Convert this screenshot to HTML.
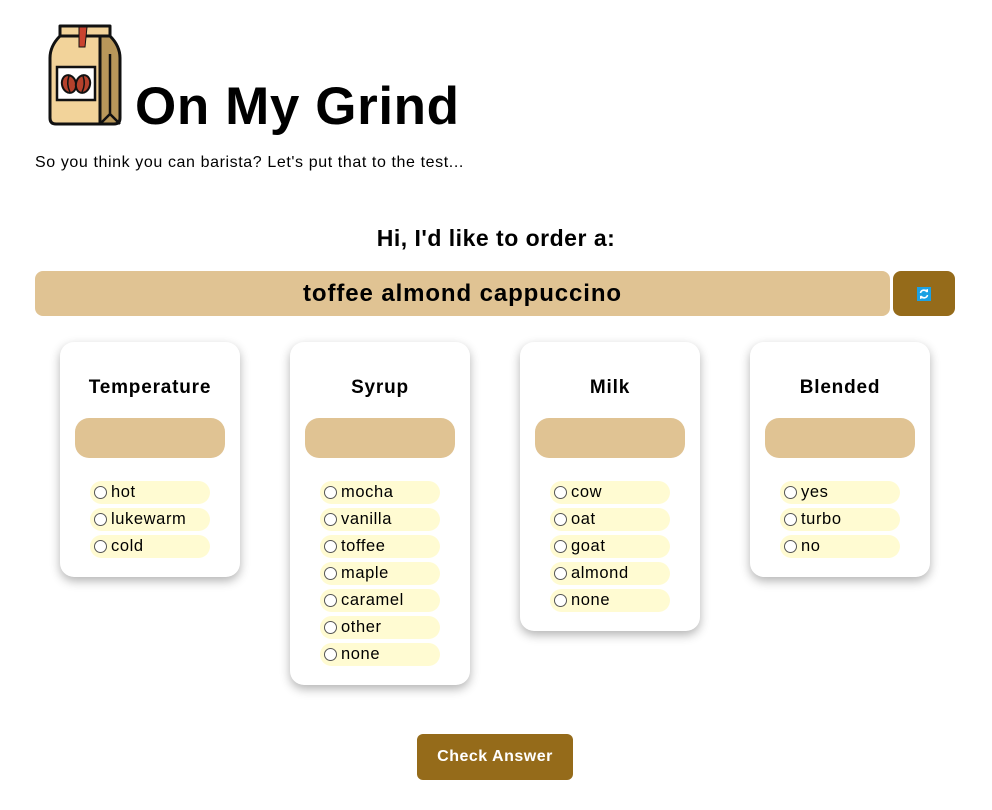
<!DOCTYPE html>
<html><head><meta charset="utf-8">
<style>
*{box-sizing:border-box;margin:0;padding:0}
body{width:992px;height:810px;background:#fff;font-family:"Liberation Sans",sans-serif;color:#000;position:relative;overflow:hidden}
.abs{position:absolute}
h1{position:absolute;left:135px;top:76px;font-size:53px;font-weight:bold;letter-spacing:0.6px}
.sub{left:35px;top:154px;font-size:16px;letter-spacing:0.6px}
.hi{left:0;width:992px;top:225px;text-align:center;font-size:23px;font-weight:bold;letter-spacing:0.5px}
.bar{left:35px;top:271px;width:855px;height:45px;background:#e0c393;border-radius:8px;text-align:center;font-size:24px;font-weight:bold;line-height:45px;letter-spacing:0.9px}
.rbtn{left:893px;top:271px;width:62px;height:45px;background:#956b1a;border-radius:8px}
.card{position:absolute;top:342px;width:180px;background:#fff;border-radius:14px;box-shadow:0 4px 10px rgba(0,0,0,0.3);padding-bottom:15px}
.card h3{text-align:center;font-size:19px;font-weight:bold;margin-top:35px;height:41px;letter-spacing:0.8px}
.tan{margin:0 15px;height:40px;background:#e0c393;border-radius:14px;margin-bottom:23px}
.opt{margin:0 30px 4px 30px;height:23px;background:#fffbd2;border-radius:12px;font-size:16.5px;line-height:23px;padding-left:4px;display:flex;align-items:center;letter-spacing:0.6px}
.opt i{display:inline-block;width:13px;height:13px;border:1px solid #555;border-radius:50%;margin-right:4px;background:#fff}
.check{left:417px;top:734px;width:156px;height:46px;background:#956b1a;border-radius:6px;color:#fff;font-weight:bold;font-size:16px;text-align:center;line-height:46px;letter-spacing:0.5px}
</style></head><body>
<svg class="abs" style="left:47px;top:24px" width="76" height="106" viewBox="0 0 76 106">
<path d="M13 2 H63 V12 H13 Z" fill="#f2d39a" stroke="#111" stroke-width="3" stroke-linejoin="round"/>
<path d="M13 12 Q3 22 3 34 V94 Q3 100 9 100 H53 V12 Z" fill="#f2d39a" stroke="#111" stroke-width="3" stroke-linejoin="round"/>
<path d="M53 12 H63 Q73 22 73 34 V94 Q73 100 67 100 H53 Z" fill="#b8975a" stroke="#111" stroke-width="3" stroke-linejoin="round"/>
<path d="M63 30 V90 M53 100 L63 90 L73 100" fill="none" stroke="#111" stroke-width="2.5"/>
<path d="M32 3 H40 L38 23 H32 Z" fill="#c9432f" stroke="#111" stroke-width="1"/>
<rect x="10" y="43" width="38" height="33" fill="#fff" stroke="#111" stroke-width="2.5"/>
<ellipse cx="22" cy="60" rx="7" ry="9" fill="#b5412c" stroke="#111" stroke-width="2" transform="rotate(-15 22 60)"/>
<ellipse cx="36" cy="60" rx="7" ry="9" fill="#b5412c" stroke="#111" stroke-width="2" transform="rotate(15 36 60)"/>
<path d="M22 52 Q19 60 23 68 M36 52 Q39 60 35 68" stroke="#111" stroke-width="1.5" fill="none"/>
</svg>
<h1>On My Grind</h1>
<div class="abs sub">So you think you can barista? Let's put that to the test...</div>
<div class="abs hi">Hi, I'd like to order a:</div>
<div class="abs bar">toffee almond cappuccino</div>
<div class="abs rbtn"><svg class="abs" style="left:24px;top:16px" width="14" height="14" viewBox="0 0 14 14"><rect width="14" height="14" fill="#1ba1e2"/><path d="M3.5 6 A3.5 3.5 0 0 1 10 5 M10.5 8 A3.5 3.5 0 0 1 4 9" stroke="#fff" stroke-width="1.6" fill="none"/><path d="M8 3 L11 5.5 L11 2 Z M6 11 L3 8.5 L3 12 Z" fill="#fff"/></svg></div>

<div class="card" style="left:60px"><h3>Temperature</h3><div class="tan"></div>
<div class="opt"><i></i>hot</div><div class="opt"><i></i>lukewarm</div><div class="opt"><i></i>cold</div></div>
<div class="card" style="left:290px"><h3>Syrup</h3><div class="tan"></div>
<div class="opt"><i></i>mocha</div><div class="opt"><i></i>vanilla</div><div class="opt"><i></i>toffee</div><div class="opt"><i></i>maple</div><div class="opt"><i></i>caramel</div><div class="opt"><i></i>other</div><div class="opt"><i></i>none</div></div>
<div class="card" style="left:520px"><h3>Milk</h3><div class="tan"></div>
<div class="opt"><i></i>cow</div><div class="opt"><i></i>oat</div><div class="opt"><i></i>goat</div><div class="opt"><i></i>almond</div><div class="opt"><i></i>none</div></div>
<div class="card" style="left:750px"><h3>Blended</h3><div class="tan"></div>
<div class="opt"><i></i>yes</div><div class="opt"><i></i>turbo</div><div class="opt"><i></i>no</div></div>

<div class="abs check">Check Answer</div>
</body></html>
